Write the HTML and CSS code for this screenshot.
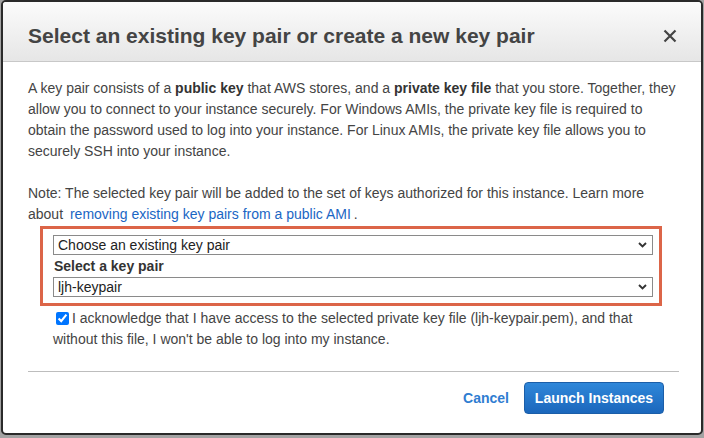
FILE: index.html
```html
<!DOCTYPE html>
<html>
<head>
<meta charset="utf-8">
<link rel="stylesheet" href="styles.css">
</head>
<body>
<div class="dialog">
  <div class="header">
    <h1 class="title">Select an existing key pair or create a new key pair</h1>
    <svg class="close" width="14" height="14" viewBox="0 0 14 14"><path d="M1.5 1.5 L12.5 12.5 M12.5 1.5 L1.5 12.5" stroke="#444" stroke-width="2.2" fill="none"/></svg>
  </div>
  <div class="body">
    <p class="para">A key pair consists of a <b>public key</b> that AWS stores, and a <b>private key file</b> that you store. Together, they allow you to connect to your instance securely. For Windows AMIs, the private key file is required to obtain the password used to log into your instance. For Linux AMIs, the private key file allows you to securely SSH into your instance.</p>
    <p class="para note">Note: The selected key pair will be added to the set of keys authorized for this instance. Learn more about <a class="link">removing existing key pairs from a public AMI</a>.</p>
    <div class="highlight">
      <div class="select"><span>Choose an existing key pair</span><svg class="chev" width="9" height="6" viewBox="0 0 9 6"><path d="M1 1 L4.5 4.5 L8 1" stroke="#333" stroke-width="1.9" fill="none"/></svg></div>
      <div class="label">Select a key pair</div>
      <div class="select"><span>ljh-keypair</span><svg class="chev" width="9" height="6" viewBox="0 0 9 6"><path d="M1 1 L4.5 4.5 L8 1" stroke="#333" stroke-width="1.9" fill="none"/></svg></div>
    </div>
    <label class="ack"><input type="checkbox" checked class="cb">I acknowledge that I have access to the selected private key file (ljh-keypair.pem), and that without this file, I won't be able to log into my instance.</label>
    <div class="sep"></div>
    <div class="footer">
      <a class="cancel">Cancel</a>
      <button class="launch">Launch Instances</button>
    </div>
  </div>
</div>
</body>
</html>
```

FILE: styles.css
```css
html, body {
  margin: 0;
  padding: 0;
}
body {
  width: 704px;
  height: 438px;
  background: #a3a3a3;
  font-family: "Liberation Sans", Arial, sans-serif;
  overflow: hidden;
}
.dialog {
  margin-left: 1px;
  width: 702px;
  box-sizing: border-box;
  background: #fff;
  border: 2px solid #2a2a2a;
  border-radius: 5px;
  overflow: hidden;
}
.header {
  display: flex;
  align-items: center;
  justify-content: space-between;
  height: 60px;
  box-sizing: border-box;
  padding: 21px 24px 13px 25px;
  background: linear-gradient(#fbfbfb, #e6e6e6);
  border-bottom: 1px solid #c8c8c8;
}
.title {
  margin: 0;
  font-size: 21px;
  line-height: 25px;
  font-weight: bold;
  color: #444;
}
.close {
  display: block;
}
.body {
  padding: 16px 22px 19px 25px;
}
.para {
  margin: 0 0 21px 0;
  font-size: 14px;
  line-height: 21px;
  color: #444;
}
.para.note {
  margin-bottom: 1px;
}
.para b {
  color: #333;
}
.link {
  color: #1a66c4;
  margin: 0 3px;
}
.highlight {
  margin: 0 17px 0 12px;
  border: 3px solid #dc6548;
  padding: 6px 6px 6px 10px;
}
.select {
  display: flex;
  align-items: center;
  justify-content: space-between;
  height: 20px;
  box-sizing: border-box;
  border: 1px solid #8a8a8a;
  padding: 0 5px 0 4px;
  font-size: 14px;
  color: #222;
}
.label {
  height: 22px;
  line-height: 22px;
  font-size: 14px;
  font-weight: bold;
  color: #333;
  padding-left: 1px;
}
.ack {
  display: block;
  margin: 2px 0 0 25px;
  font-size: 14px;
  line-height: 21px;
  color: #444;
}
.cb {
  margin: 0 3px 0 3px;
  width: 13px;
  height: 13px;
  vertical-align: -2px;
}
.sep {
  margin-top: 21px;
  height: 1px;
  background: #bdbdbd;
}
.footer {
  display: flex;
  justify-content: flex-end;
  align-items: center;
  gap: 15px;
  padding: 10px 15px 0 0;
}
.cancel {
  font-size: 14px;
  font-weight: bold;
  color: #2f7dd1;
}
.launch {
  width: 140px;
  height: 32px;
  box-sizing: border-box;
  border: 1px solid #1b5ea8;
  border-radius: 4px;
  background: linear-gradient(#2f87d9, #1b67bc);
  color: #fff;
  font-family: "Liberation Sans", Arial, sans-serif;
  font-size: 14px;
  font-weight: bold;
  padding: 0;
}
```
